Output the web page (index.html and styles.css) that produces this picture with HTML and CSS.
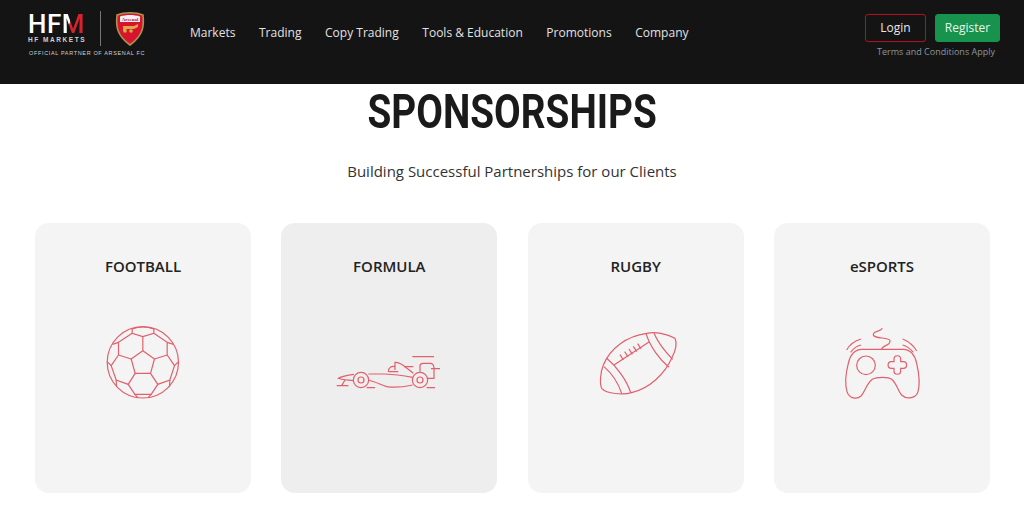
FILE: index.html
```html
<!DOCTYPE html>
<html lang="en">
<head>
  <meta charset="UTF-8">
  <meta name="viewport" content="width=device-width, initial-scale=1.0">
  <title>Sponsorships</title>
  <link rel="stylesheet" href="styles.css">
</head>
<body>
  <header class="topbar">
    <div class="logo">
      <div class="logo-row">
        <div class="brand">
          <div class="brand-name">HF<span class="brand-m">M</span></div>
          <div class="brand-sub">HF MARKETS</div>
        </div>
        <div class="logo-divider"></div>
        <svg class="crest" viewBox="0 0 30 36" aria-hidden="true">
          <path d="M2 4 C9 1 21 1 28 4 C29 14 29 24 15 34 C1 24 1 14 2 4Z" fill="#d8142c" stroke="#a8934f" stroke-width="1.6"/>
          <path d="M5 5.5 C11 3.5 19 3.5 25 5.5 L25 11 H5Z" fill="#f2f2f2"/>
          <text x="15" y="10" class="crest-text">Arsenal</text>
          <path d="M8 15 H19 L23 13 V16 L19 18 H12 L10 20 H8Z" fill="#d9a94c"/>
          <circle cx="10" cy="20" r="1.8" fill="#d9a94c"/>
          <circle cx="16" cy="20" r="1.8" fill="#d9a94c"/>
        </svg>
      </div>
      <div class="logo-partner">OFFICIAL PARTNER OF ARSENAL FC</div>
    </div>
    <nav class="nav">
      <a href="#">Markets</a>
      <a href="#">Trading</a>
      <a href="#">Copy Trading</a>
      <a href="#">Tools &amp; Education</a>
      <a href="#">Promotions</a>
      <a href="#">Company</a>
    </nav>
    <div class="account">
      <div class="account-buttons">
        <a href="#" class="btn btn-login">Login</a>
        <a href="#" class="btn btn-register">Register</a>
      </div>
      <div class="terms">Terms and Conditions Apply</div>
    </div>
  </header>

  <main>
    <h1><span>SPONSORSHIPS</span></h1>
    <p class="lead">Building Successful Partnerships for our Clients</p>

    <section class="cards">
      <div class="card">
        <h2>FOOTBALL</h2>
        <svg class="icon" viewBox="-22.5 0 360 285" aria-hidden="true">
          <circle cx="157" cy="142" r="107"/>
          <path d="M157 107 L192 132 L180 175 H134 L122 132Z"/>
          <path d="M157 107 V65 M192 132 L230 120 M180 175 L202 208 M134 175 L113 208 M122 132 L84 120"/>
          <path d="M125 42 L125 55 L157 65 L190 55 L190 42 C168 34 146 34 125 42Z"/>
          <path d="M125 55 L84 82 V120 M190 55 L230 82 V120"/>
          <path d="M84 82 L66 88 M230 82 L249 88"/>
          <path d="M84 120 L62 152 L77 195 L113 208 L133 238 H182 L202 208 L238 195 L252 152 L230 120"/>
          <path d="M62 152 L50 140 M252 152 L264 140 M77 195 L78 215 M238 195 L237 215 M133 238 L142 248 M182 238 L173 248"/>
        </svg>
      </div>
      <div class="card card-active">
        <h2>FORMULA</h2>
        <svg class="icon" viewBox="-3 -90 360 285" aria-hidden="true">
          <path d="M20 122 H55 M45 105 L35 122 M110 128 H135 M290 128 H315"/>
          <path d="M72 88 C55 90 38 92 25 100 C35 105 55 105 70 107"/>
          <circle cx="93" cy="105" r="23"/>
          <circle cx="93" cy="105" r="9"/>
          <circle cx="270" cy="105" r="23"/>
          <circle cx="270" cy="105" r="9"/>
          <path d="M115 87 H165 C190 88 220 92 248 97"/>
          <path d="M115 105 C135 110 150 118 170 125 C190 128 225 125 248 120"/>
          <path d="M175 80 C175 68 185 62 195 65 M175 80 H205 M195 75 V52 C210 50 225 65 250 85"/>
          <path d="M222 65 H250 M247 35 H312"/>
          <path d="M270 80 V62 C270 57 275 55 280 55 H300 C310 55 312 60 312 70 V100 H293 M303 71 H330"/>
        </svg>
      </div>
      <div class="card">
        <h2>RUGBY</h2>
        <svg class="icon" viewBox="-42 -15 360 285" aria-hidden="true">
          <path d="M255 55 C230 40 195 35 170 40 C110 48 60 85 40 135 C32 155 28 190 35 205 C50 222 100 225 125 218 C180 205 225 160 245 115 C258 90 262 70 255 55Z"/>
          <path d="M72 135 L178 65"/>
          <path d="M90 104 L100 120 M104 95 L114 111 M117 87 L127 103 M130 79 L140 95 M143 71 L153 87"/>
          <path d="M50 115 C80 140 110 180 122 218 M42 140 C65 160 85 190 95 220"/>
          <path d="M168 40 C180 80 210 120 237 142 M192 40 C205 70 225 95 248 118"/>
        </svg>
      </div>
      <div class="card">
        <h2>eSPORTS</h2>
        <svg class="icon" viewBox="-39 -15 360 285" aria-hidden="true">
          <path d="M80 88 H205 C225 88 240 105 245 130 C252 160 256 190 249 215 C244 235 215 240 200 225 C190 215 185 190 170 178 C160 170 125 170 112 178 C95 190 90 215 78 228 C65 240 42 235 36 215 C29 190 32 160 40 130 C45 105 60 88 80 88Z"/>
          <circle cx="93" cy="136" r="28"/>
          <path d="M177 117 C177 104 197 104 197 117 V125 H205 C218 125 218 145 205 145 H197 V153 C197 166 177 166 177 153 V145 H169 C156 145 156 125 169 125 H177Z"/>
          <path d="M140 88 C140 75 168 78 165 62 C163 50 118 58 115 45 C113 30 135 38 142 25"/>
          <path d="M35 90 C45 72 60 62 78 57 M47 97 C55 85 65 78 78 75"/>
          <path d="M245 93 C235 75 222 65 203 57 M235 97 C225 85 215 78 203 75"/>
        </svg>
      </div>
    </section>
  </main>
</body>
</html>
```

FILE: styles.css
```css
body {
  margin: 0;
  font-family: "Open Sans", sans-serif;
  background-color: white;
  color: #1a1a1a;
}
.topbar {
  display: flex;
  align-items: flex-start;
  height: 84px;
  background-color: #141414;
}

/* logo */
.logo {
  width: 162px;
  padding: 11px 0 0 28px;
}
.logo-row {
  display: flex;
  align-items: flex-start;
  height: 37px;
}
.brand {
  width: 72px;
  padding-top: 3px;
}
.brand-name {
  font-family: Roboto, sans-serif;
  font-weight: 500;
  font-size: 26px;
  line-height: 20px;
  height: 20px;
  letter-spacing: 0.5px;
  color: white;
}
.brand-m {
  background: linear-gradient(100deg, white 35%, #d8232f 36%);
  -webkit-background-clip: text;
  background-clip: text;
  color: transparent;
}
.brand-sub {
  font-family: "Liberation Sans", sans-serif;
  font-size: 6.5px;
  font-weight: 700;
  letter-spacing: 1.55px;
  line-height: 8px;
  margin-top: 2px;
  color: #d0d0d0;
  white-space: nowrap;
}
.logo-divider {
  width: 1px;
  height: 35px;
  margin-right: 14px;
  background-color: #777;
}
.crest {
  width: 30px;
  height: 36px;
}
.crest-text {
  font-family: "Liberation Serif", serif;
  font-size: 5px;
  font-weight: 700;
  text-anchor: middle;
  fill: #c8102e;
}
.logo-partner {
  font-family: "Liberation Sans", sans-serif;
  font-size: 5.5px;
  letter-spacing: 0.65px;
  line-height: 8px;
  margin-top: 1px;
  padding-left: 1px;
  color: #d0d0d0;
  white-space: nowrap;
}

/* nav */
.nav {
  display: flex;
  gap: 23.6px;
  padding-top: 24px;
}
.nav a {
  font-size: 12px;
  line-height: 18px;
  color: #e2e2e2;
  text-decoration: none;
}

/* account */
.account {
  margin-left: auto;
  padding: 14px 24px 0 0;
  display: flex;
  flex-direction: column;
  align-items: flex-end;
}
.account-buttons {
  display: flex;
  gap: 9px;
}
.btn {
  display: block;
  box-sizing: border-box;
  height: 28px;
  border-radius: 3px;
  font-size: 12px;
  line-height: 25px;
  text-align: center;
  text-decoration: none;
}
.btn-login {
  width: 61px;
  border: 1px solid #b3101f;
  color: #e8e8e8;
}
.btn-register {
  width: 65px;
  border: 1px solid #17934d;
  background-color: #17934d;
  color: #e8f5ec;
}
.terms {
  font-size: 9px;
  line-height: 13px;
  margin: 3px 5px 0 0;
  color: #8f959a;
}

/* main */
h1 {
  margin: 0;
  height: 56px;
  font-family: Roboto, sans-serif;
  font-weight: 700;
  font-size: 49px;
  line-height: 56px;
  text-align: center;
  color: #1a1a1a;
}
h1 span {
  display: inline-block;
  transform: scaleX(0.79);
}
.lead {
  margin: 20px 0 0;
  font-size: 15px;
  line-height: 22px;
  text-align: center;
  color: #333;
}
.cards {
  display: grid;
  grid-template-columns: repeat(4, 216px);
  justify-content: space-between;
  margin: 41px 34px 26px 35px;
}
.card {
  height: 270px;
  padding-top: 32px;
  box-sizing: border-box;
  border-radius: 14px;
  background-color: #f4f4f4;
  text-align: center;
}
.card-active {
  background-color: #eeeeee;
}
.card h2 {
  margin: 0;
  font-size: 15px;
  font-weight: 600;
  line-height: 22px;
  color: #222;
}
.icon {
  display: block;
  width: 120px;
  height: 95px;
  margin: 38px auto 0;
  fill: none;
  stroke: #e0606c;
  stroke-width: 3.6;
}
```
